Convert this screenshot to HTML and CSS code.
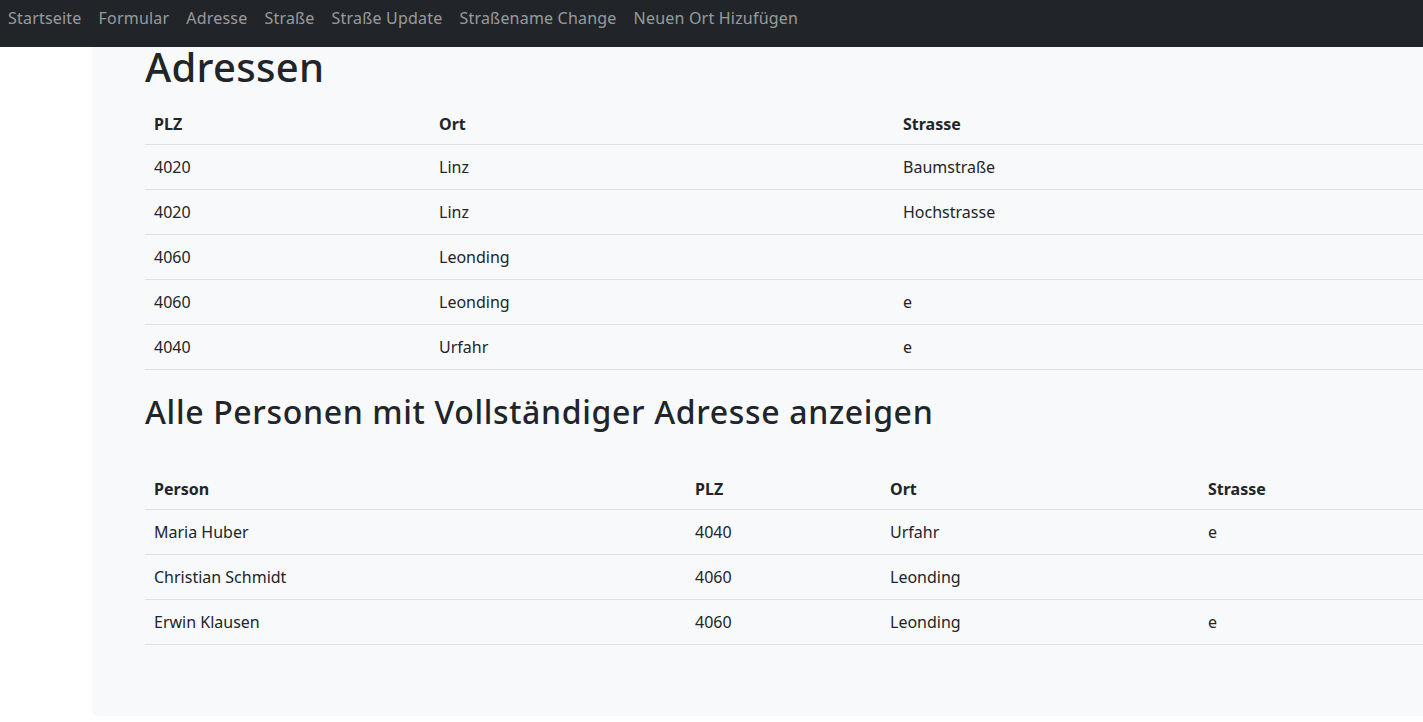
FILE: index.html
```html
<!DOCTYPE html>
<html lang="de">
<head>
<meta charset="utf-8">
<title>Adressen</title>
<link rel="stylesheet" href="styles.css">
</head>
<body>
<nav class="navbar">
  <a class="nav-link" href="#">Startseite</a>
  <a class="nav-link" href="#">Formular</a>
  <a class="nav-link" href="#">Adresse</a>
  <a class="nav-link" href="#">Straße</a>
  <a class="nav-link" href="#">Straße Update</a>
  <a class="nav-link" href="#">Straßename Change</a>
  <a class="nav-link" href="#">Neuen Ort Hizufügen</a>
</nav>
<main class="panel">
  <h1 class="title">Adressen</h1>
  <table class="table t1">
    <thead>
      <tr><th class="c-plz">PLZ</th><th class="c-ort">Ort</th><th class="c-str">Strasse</th></tr>
    </thead>
    <tbody>
      <tr><td>4020</td><td>Linz</td><td>Baumstraße</td></tr>
      <tr><td>4020</td><td>Linz</td><td>Hochstrasse</td></tr>
      <tr><td>4060</td><td>Leonding</td><td></td></tr>
      <tr><td>4060</td><td>Leonding</td><td>e</td></tr>
      <tr><td>4040</td><td>Urfahr</td><td>e</td></tr>
    </tbody>
  </table>
  <h2 class="subtitle">Alle Personen mit Vollständiger Adresse anzeigen</h2>
  <table class="table t2">
    <thead>
      <tr><th class="c-person">Person</th><th class="c-plz2">PLZ</th><th class="c-ort2">Ort</th><th class="c-str2">Strasse</th></tr>
    </thead>
    <tbody>
      <tr><td>Maria Huber</td><td>4040</td><td>Urfahr</td><td>e</td></tr>
      <tr><td>Christian Schmidt</td><td>4060</td><td>Leonding</td><td></td></tr>
      <tr><td>Erwin Klausen</td><td>4060</td><td>Leonding</td><td>e</td></tr>
    </tbody>
  </table>
</main>
</body>
</html>
```
FILE: styles.css
```css
html {
  overflow: hidden;
}
body {
  margin: 0;
  font-family: "Noto Sans", "Open Sans", sans-serif;
  font-size: 16px;
  line-height: 1.5;
  color: #212529;
  background: #fff;
}
.navbar {
  display: flex;
  align-items: flex-start;
  gap: 17px;
  height: 47px;
  box-sizing: border-box;
  padding: 6px 8px 0;
  background: #212529;
}
.nav-link {
  color: rgba(255, 255, 255, 0.55);
  text-decoration: none;
  white-space: nowrap;
  letter-spacing: 0.2px;
}
.panel {
  margin-left: 92px;
  width: 1500px;
  box-sizing: border-box;
  padding: 0 0 71px 53px;
  background: #f8f9fa;
  border-radius: 0 0 0 6px;
}
.title {
  margin: 0 0 17px;
  font-size: 40px;
  font-weight: 500;
  line-height: 40px;
  letter-spacing: 0.3px;
}
.subtitle {
  margin: 23px 0 38px;
  font-size: 32px;
  font-weight: 500;
  line-height: 38px;
  letter-spacing: 0.65px;
}
.table {
  border-collapse: collapse;
  width: 1400px;
  table-layout: fixed;
}
.table th,
.table td {
  text-align: left;
  padding: 0 9px;
  border-bottom: 1px solid #dee2e6;
  white-space: nowrap;
}
.table th {
  height: 40px;
  font-weight: 700;
}
.table td {
  height: 44px;
}
.c-plz { width: 267px; }
.c-ort { width: 446px; }
.c-str { width: auto; }
.c-person { width: 523px; }
.c-plz2 { width: 177px; }
.c-ort2 { width: 300px; }
.c-str2 { width: auto; }
```
